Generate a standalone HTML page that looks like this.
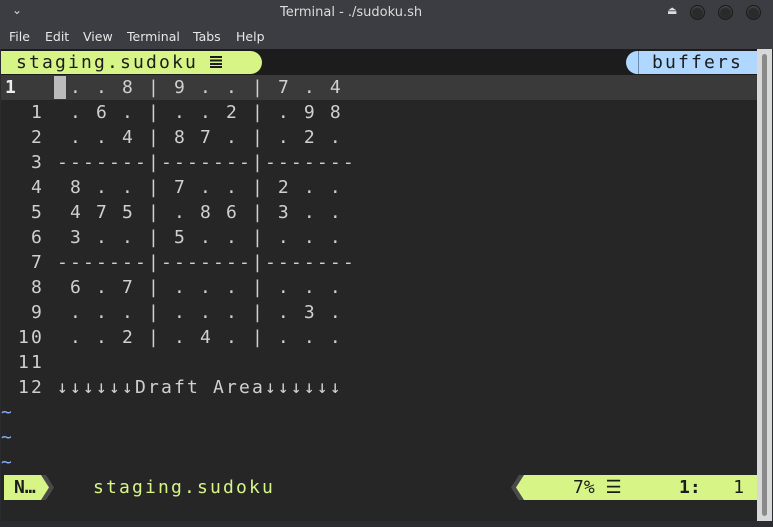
<!DOCTYPE html>
<html><head><style>
*{margin:0;padding:0}
body{width:773px;height:527px;background:#2b2c30;overflow:hidden;position:relative;font-family:"DejaVu Sans Mono","Liberation Mono",monospace}
#title{position:absolute;left:0;top:0;width:773px;height:25px;background:#3c3d42;color:#dcdcdc;font:13px "DejaVu Sans","Liberation Sans",sans-serif}
#menu{position:absolute;left:0;top:25px;width:773px;height:24px;background:#3c3d42;color:#e8e8e8;font:12.5px "DejaVu Sans","Liberation Sans",sans-serif}
#menu span{position:absolute;top:4px}
#term{position:absolute;left:1px;top:49px;width:756px;height:472px;background:#262626}
.l{position:absolute;left:4px;height:25px;line-height:25px;font-size:18px;letter-spacing:2.16px;white-space:pre;color:#d0d0d0}
.btn{position:absolute;top:5px;width:13px;height:13px;border-radius:50%;background:#2a2a2c;border:1px solid #1a1a1a;box-shadow:inset 0 1px 2px #555}
</style></head><body>
<div id="title"><span style="position:absolute;left:12px;top:3px;font-size:12px">&#8964;</span><span style="position:absolute;left:280px;top:5px">Terminal - ./sudoku.sh</span>
<span style="position:absolute;left:667px;top:4px;font-size:11px;color:#ddd">&#9167;</span>
<div class="btn" style="left:690px"></div><div class="btn" style="left:718px"></div><div class="btn" style="left:746px"></div></div>
<div id="menu"><span style="left:9px">File</span><span style="left:45px">Edit</span><span style="left:83px">View</span><span style="left:127px">Terminal</span><span style="left:193px">Tabs</span><span style="left:236px">Help</span></div>
<div id="term">
<div style="position:absolute;left:0;top:0;width:756px;height:26px;background:#1c1c1c"></div>
<div style="position:absolute;left:0;top:2px;width:261px;height:23px;background:#d7f587;border-radius:0 12px 12px 0"></div>
<div class="l" style="top:1px;left:15px;color:#1c1c1c">staging.sudoku</div>
<div style="position:absolute;left:209px;top:7px;width:12px;height:12px;background:repeating-linear-gradient(#1c1c1c 0 2px,transparent 2px 3.4px)"></div>
<div style="position:absolute;left:625px;top:2px;width:131px;height:23px;background:#afd7ff;border-radius:12px 0 0 12px"></div>
<div style="position:absolute;left:637px;top:2px;width:1px;height:23px;background:#6a8bb0"></div>
<div class="l" style="top:1px;left:651px;color:#1c1c1c">buffers</div>
<div style="position:absolute;left:0;top:26px;width:756px;height:25px;background:#3a3a3a"></div>
<div style="position:absolute;left:53px;top:27px;width:12px;height:23px;background:#bcbcbc"></div>
<div class="l" style="top:26px"><b style="color:#eee">1</b>    . . 8 | 9 . . | 7 . 4</div>
<div class="l" style="top:51px">  1  . 6 . | . . 2 | . 9 8</div>
<div class="l" style="top:76px">  2  . . 4 | 8 7 . | . 2 .</div>
<div class="l" style="top:101px">  3 -------|-------|-------</div>
<div class="l" style="top:126px">  4  8 . . | 7 . . | 2 . .</div>
<div class="l" style="top:151px">  5  4 7 5 | . 8 6 | 3 . .</div>
<div class="l" style="top:176px">  6  3 . . | 5 . . | . . .</div>
<div class="l" style="top:201px">  7 -------|-------|-------</div>
<div class="l" style="top:226px">  8  6 . 7 | . . . | . . .</div>
<div class="l" style="top:251px">  9  . . . | . . . | . 3 .</div>
<div class="l" style="top:276px"> 10  . . 2 | . 4 . | . . .</div>
<div class="l" style="top:301px"> 11</div>
<div class="l" style="top:326px"> 12 ↓↓↓↓↓↓Draft Area↓↓↓↓↓↓</div>
<div class="l" style="top:351px;left:0;color:#87afff">~</div>
<div class="l" style="top:376px;left:0;color:#87afff">~</div>
<div class="l" style="top:401px;left:0;color:#87afff">~</div>
<div style="position:absolute;left:0;top:426px;width:756px;height:25px;background:#262626"></div>
<div style="position:absolute;left:3px;top:426px;width:34px;height:25px;background:#d7f587"></div>
<svg style="position:absolute;left:37px;top:426px" width="18" height="25"><polygon points="0,0 8,0 16,12.5 8,25 0,25" fill="#4a4a4a"/><polygon points="0,0 3,0 11,12.5 3,25 0,25" fill="#d7f587"/></svg>
<div class="l" style="top:426px;left:13px;color:#1c1c1c;font-weight:bold;letter-spacing:0">N…</div>
<div class="l" style="top:426px;left:92px;color:#d7f587">staging.sudoku</div>
<svg style="position:absolute;left:510px;top:426px" width="20" height="25"><polygon points="8,0 20,0 20,25 8,25 0,12.5" fill="#4a4a4a"/><polygon points="13,0 20,0 20,25 13,25 5,12.5" fill="#d7f587"/></svg>
<div style="position:absolute;left:529px;top:426px;width:227px;height:25px;background:#d7f587"></div>
<div class="l" style="top:426px;left:572px;color:#1c1c1c;letter-spacing:0">7% ☰</div>
<div class="l" style="top:426px;left:678px;color:#1c1c1c;letter-spacing:0"><b>1:</b>   1</div>
</div>
<div style="position:absolute;left:757px;top:49px;width:15px;height:472px;background:#d8d8d8"></div>
<div style="position:absolute;left:762px;top:54px;width:5px;height:462px;background:#8a8a8a;border-radius:3px"></div>
</body></html>
